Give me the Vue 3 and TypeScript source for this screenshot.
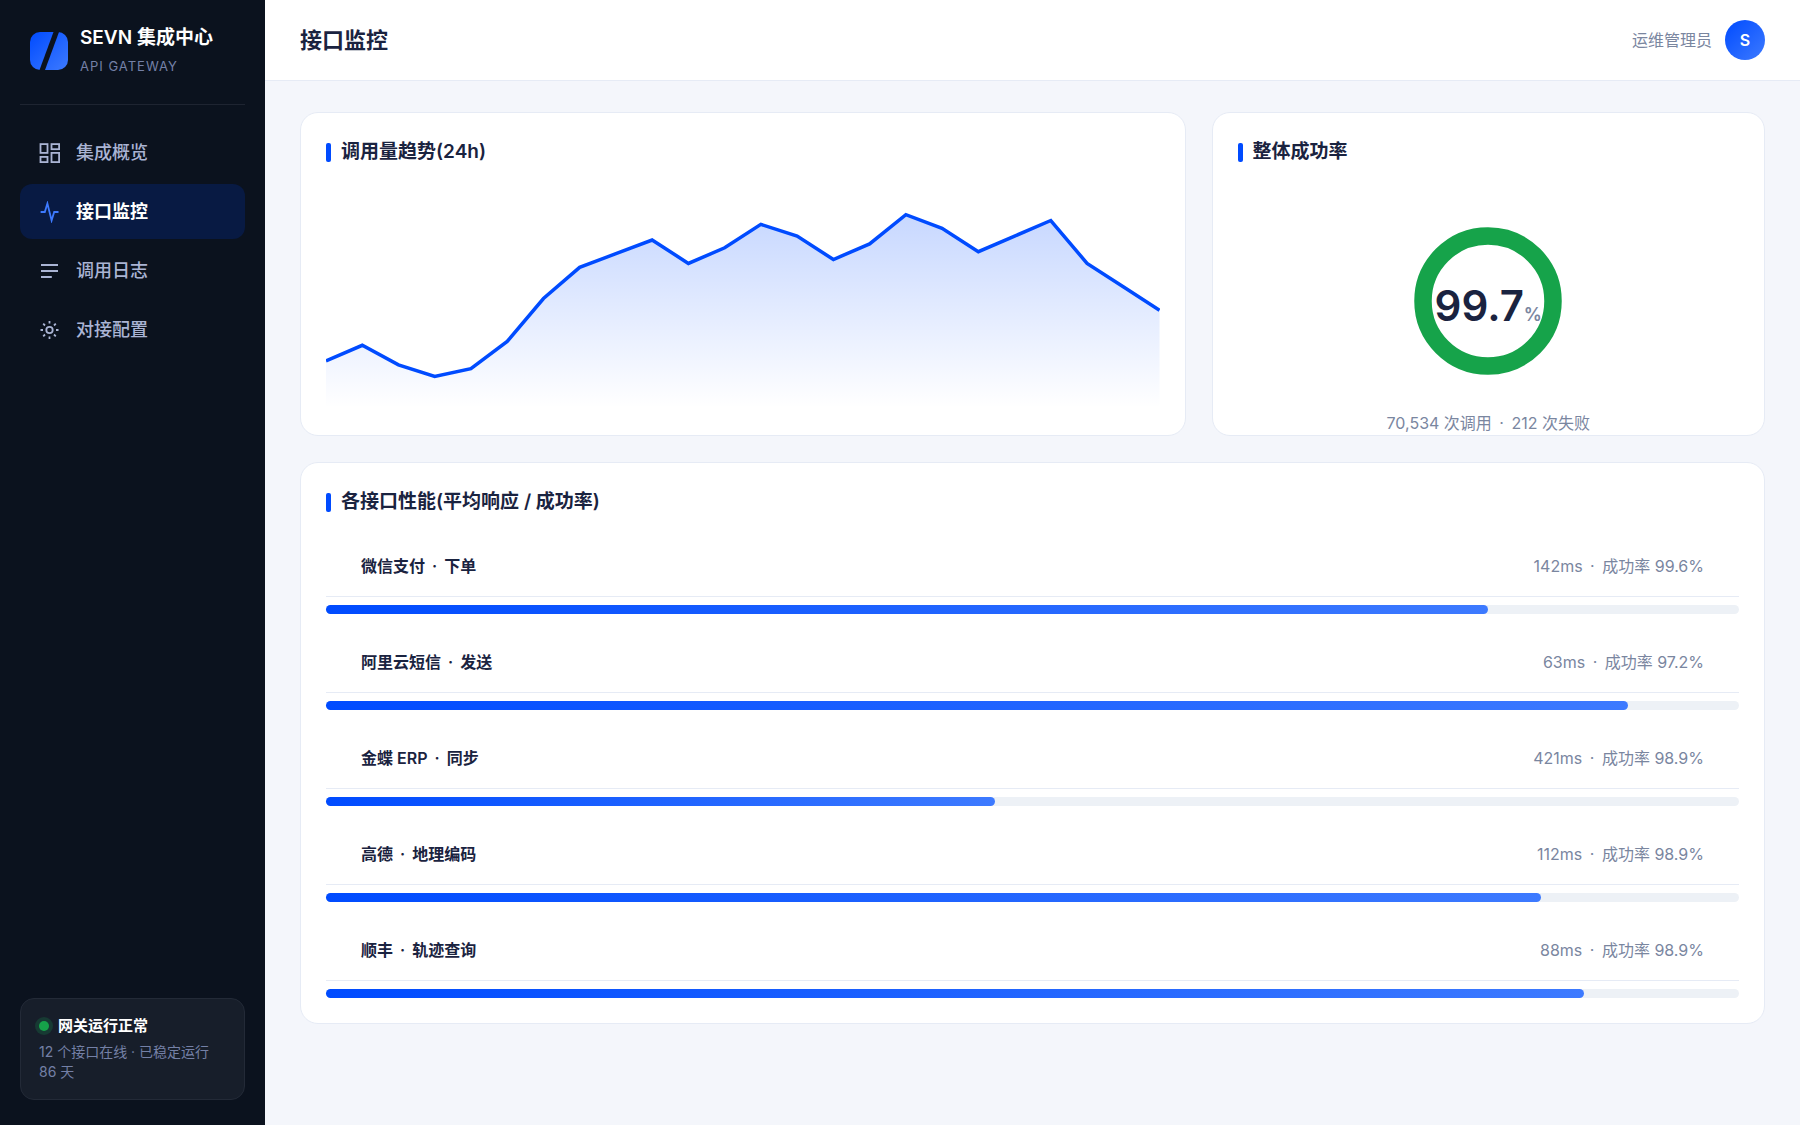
<script setup lang="ts">
interface NavItem {
  key: string
  label: string
  active?: boolean
}

interface Endpoint {
  vendor: string
  action: string
  latency: number
  rate: string
}

const nav: NavItem[] = [
  { key: 'overview', label: '集成概览' },
  { key: 'monitor', label: '接口监控', active: true },
  { key: 'logs', label: '调用日志' },
  { key: 'config', label: '对接配置' },
]

const endpoints: Endpoint[] = [
  { vendor: '微信支付', action: '下单', latency: 142, rate: '99.6%' },
  { vendor: '阿里云短信', action: '发送', latency: 63, rate: '97.2%' },
  { vendor: '金蝶 ERP', action: '同步', latency: 421, rate: '98.9%' },
  { vendor: '高德', action: '地理编码', latency: 112, rate: '98.9%' },
  { vendor: '顺丰', action: '轨迹查询', latency: 88, rate: '98.9%' },
]

// Faster responses give a longer bar; 800ms is the slowest end of the scale.
const barWidth = (latency: number): string => `${100 - latency / 8}%`

// Hourly call volume
const hourly: number[] = [
  12, 16, 11, 8, 10, 17, 28, 36, 39.5, 43, 37, 41, 47, 44, 38, 42, 49.5, 46, 40, 44, 48, 37, 31, 25,
]
const chartWidth = 834
const chartHeight = 220
const points = hourly
  .map((v, i) => `${((i * chartWidth) / (hourly.length - 1)).toFixed(1)},${(219.7 - v * 3.9).toFixed(1)}`)
  .join(' L')
const linePath = `M${points}`
const areaPath = `M0,${chartHeight} L${points} L${chartWidth},${chartHeight} Z`
</script>

<template>
  <div class="shell">
    <aside class="sidebar">
      <div class="brand">
        <svg class="logo" viewBox="0 0 38 38" aria-hidden="true">
          <defs>
            <linearGradient id="logo-fill" x1="0" y1="0" x2="1" y2="1">
              <stop offset="0" stop-color="#004bff" />
              <stop offset="1" stop-color="#3d7aff" />
            </linearGradient>
          </defs>
          <rect width="38" height="38" rx="10" fill="url(#logo-fill)" />
          <path d="M23.500 0H29L15 38H9.500Z" fill="#0b121e" />
        </svg>
        <div class="brand-text">
          <strong>SEVN 集成中心</strong>
          <span>API GATEWAY</span>
        </div>
      </div>

      <nav class="nav">
        <a
          v-for="item in nav"
          :key="item.key"
          :href="`#${item.key}`"
          class="nav-item"
          :class="{ active: item.active }"
        >
          <svg viewBox="0 0 22 22" aria-hidden="true">
            <template v-if="item.key === 'overview'">
              <rect x="2.500" y="2.100" width="7" height="8.800" />
              <rect x="13.500" y="2.100" width="7.600" height="5.100" />
              <rect x="13.500" y="10.900" width="7.600" height="9.200" />
              <rect x="2.500" y="14.900" width="7" height="5.200" />
            </template>
            <path v-else-if="item.key === 'monitor'" d="M2.600 11H6.800L9.400 2.500L13.600 19.500L16.200 11H20.500" />
            <path v-else-if="item.key === 'logs'" d="M3 5H20M3 11H20M3 17H13.800" />
            <template v-else>
              <circle cx="11.500" cy="11" r="3.200" />
              <path
                d="M11.500 2V4.500M11.500 17.500V20M2.500 11H5M18 11H20.500M5.200 4.700L7 6.500M16 15.500L17.800 17.300M5.200 17.300L7 15.500M16 6.500L17.800 4.700"
              />
            </template>
          </svg>
          <span>{{ item.label }}</span>
        </a>
      </nav>

      <section class="status">
        <div class="status-title"><i class="dot"></i>网关运行正常</div>
        <p>12 个接口在线 · 已稳定运行 86 天</p>
      </section>
    </aside>

    <div class="page">
      <header class="topbar">
        <h1>接口监控</h1>
        <div class="user">
          <span>运维管理员</span>
          <span class="avatar">S</span>
        </div>
      </header>

      <main class="content">
        <div class="overview">
          <section class="card">
            <h2>调用量趋势(24h)</h2>
            <svg
              class="chart"
              :viewBox="`0 0 ${chartWidth} ${chartHeight}`"
              preserveAspectRatio="none"
              role="img"
              aria-label="调用量趋势"
            >
              <defs>
                <linearGradient id="area-fill" x1="0" y1="0" x2="0" y2="1">
                  <stop offset="0" stop-color="#004bff" stop-opacity="0.22" />
                  <stop offset="1" stop-color="#004bff" stop-opacity="0" />
                </linearGradient>
              </defs>
              <path :d="areaPath" fill="url(#area-fill)" />
              <path :d="linePath" class="chart-line" />
            </svg>
          </section>

          <section class="card">
            <h2>整体成功率</h2>
            <div class="gauge">
              <svg viewBox="0 0 148 148" aria-hidden="true">
                <circle cx="74" cy="74" r="65" />
              </svg>
              <div class="gauge-value">99.7<small>%</small></div>
            </div>
            <p class="caption">70,534 次调用 <i class="sep">·</i> 212 次失败</p>
          </section>
        </div>

        <section class="card">
          <h2>各接口性能(平均响应 / 成功率)</h2>
          <ul class="endpoints">
            <li v-for="e in endpoints" :key="e.vendor">
              <div class="endpoint-head">
                <b>{{ e.vendor }} <i class="sep">·</i> {{ e.action }}</b>
                <span>{{ e.latency }}ms <i class="sep">·</i> 成功率 {{ e.rate }}</span>
              </div>
              <div class="track">
                <div class="fill" :style="{ width: barWidth(e.latency) }"></div>
              </div>
            </li>
          </ul>
        </section>
      </main>
    </div>
  </div>
</template>

<style>
body {
  margin: 0;
  background: #f4f6fb;
}
</style>

<style scoped>
* {
  box-sizing: border-box;
}

.shell {
  display: flex;
  min-height: 100vh;
  font-family: Inter, 'Noto Sans CJK SC', sans-serif;
  font-size: 16px;
  line-height: 24px;
  color: #1a2340;
  background: #f4f6fb;
}

h1,
h2,
p,
ul {
  margin: 0;
  padding: 0;
}

.sep {
  padding: 0 3px;
  font-style: normal;
}

.sidebar {
  display: flex;
  flex: 0 0 265px;
  flex-direction: column;
  padding: 24px 20px 25px;
  background: #0b121e;
}

.brand {
  display: flex;
  align-items: center;
  gap: 12px;
  height: 81px;
  padding: 0 10px 26px;
  border-bottom: 1px solid #1e2431;
}

.logo {
  width: 38px;
  height: 38px;
}

.brand-text {
  display: flex;
  flex-direction: column;
  gap: 4px;
  padding-bottom: 2px;
}

.brand-text strong {
  font-size: 19px;
  font-weight: 600;
  line-height: 28px;
  color: #fff;
}

.brand-text span {
  font-size: 13px;
  line-height: 20px;
  letter-spacing: 1px;
  color: #7480a6;
}

.nav {
  display: flex;
  flex-direction: column;
  gap: 4px;
  margin-top: 20px;
}

.nav-item {
  display: flex;
  align-items: center;
  gap: 16px;
  height: 55px;
  padding: 0 18px;
  border-radius: 12px;
  font-size: 18px;
  font-weight: 500;
  color: #aab4d4;
  text-decoration: none;
}

.nav-item svg {
  width: 22px;
  height: 22px;
  fill: none;
  stroke: #aab4d4;
  stroke-width: 1.8;
}

.nav-item.active {
  font-weight: 600;
  color: #fff;
  background: #081a43;
}

.nav-item.active svg {
  stroke: #3d7aff;
}

.status {
  margin-top: auto;
  padding: 15px 18px 17px;
  border: 1px solid #232a37;
  border-radius: 14px;
  background: #171e2a;
}

.status-title {
  display: flex;
  align-items: center;
  gap: 9px;
  font-size: 15px;
  font-weight: 600;
  color: #fff;
}

.dot {
  width: 10px;
  height: 10px;
  border-radius: 50%;
  background: #16a34a;
  box-shadow: 0 0 0 4px #173a33;
}

.status p {
  margin-top: 4px;
  font-size: 14px;
  line-height: 20px;
  color: #7480a6;
}

.page {
  flex: 1;
  min-width: 0;
}

.topbar {
  display: flex;
  align-items: center;
  justify-content: space-between;
  height: 81px;
  padding: 0 35px;
  border-bottom: 1px solid #e6ebf5;
  background: #fff;
}

.topbar h1 {
  font-size: 22px;
  font-weight: 600;
  line-height: 32px;
}

.user {
  display: flex;
  align-items: center;
  gap: 13px;
  color: #7a869f;
}

.avatar {
  display: grid;
  place-items: center;
  width: 40px;
  height: 40px;
  border-radius: 50%;
  font-weight: 600;
  color: #fff;
  background: linear-gradient(135deg, #004bff, #3d7aff);
}

.content {
  display: flex;
  flex-direction: column;
  gap: 26px;
  padding: 31px 35px;
}

.overview {
  display: grid;
  grid-template-columns: 8fr 5fr;
  gap: 26px;
}

.card {
  padding: 25px;
  border: 1px solid #e6ebf5;
  border-radius: 18px;
  background: #fff;
}

.overview .card {
  height: 324px;
}

.card h2 {
  display: flex;
  align-items: center;
  gap: 10px;
  font-size: 19px;
  font-weight: 600;
  line-height: 28px;
}

.card h2::before {
  width: 5px;
  height: 19px;
  border-radius: 2px;
  background: #004bff;
  content: '';
}

.chart {
  display: block;
  width: 100%;
  height: 220px;
  margin-top: 22px;
}

.chart-line {
  fill: none;
  stroke: #004bff;
  stroke-width: 3.5;
}

.gauge {
  display: grid;
  place-items: center;
  margin-top: 61px;
}

.gauge svg,
.gauge-value {
  grid-area: 1 / 1;
}

.gauge svg {
  width: 148px;
  height: 148px;
  fill: none;
  stroke: #16a34a;
  stroke-width: 17.5;
}

.gauge-value {
  padding-top: 18px;
  font-size: 42px;
  font-weight: 600;
  line-height: 48px;
}

.gauge-value small {
  font-size: 18px;
  color: #7a869f;
}

.caption {
  margin-top: 36px;
  text-align: center;
  color: #7a869f;
}

.endpoints {
  display: flex;
  flex-direction: column;
  gap: 18px;
  margin-top: 20px;
  list-style: none;
}

.endpoint-head {
  display: flex;
  justify-content: space-between;
  padding: 18px 35px;
  border-bottom: 1px solid #e6ebf5;
}

.endpoint-head b {
  font-weight: 600;
}

.endpoint-head span {
  color: #7a869f;
}

.track {
  height: 9px;
  margin-top: 8px;
  border-radius: 5px;
  background: #edf1f6;
}

.fill {
  height: 100%;
  border-radius: 5px;
  background: linear-gradient(90deg, #004bff, #3d7aff);
}
</style>
